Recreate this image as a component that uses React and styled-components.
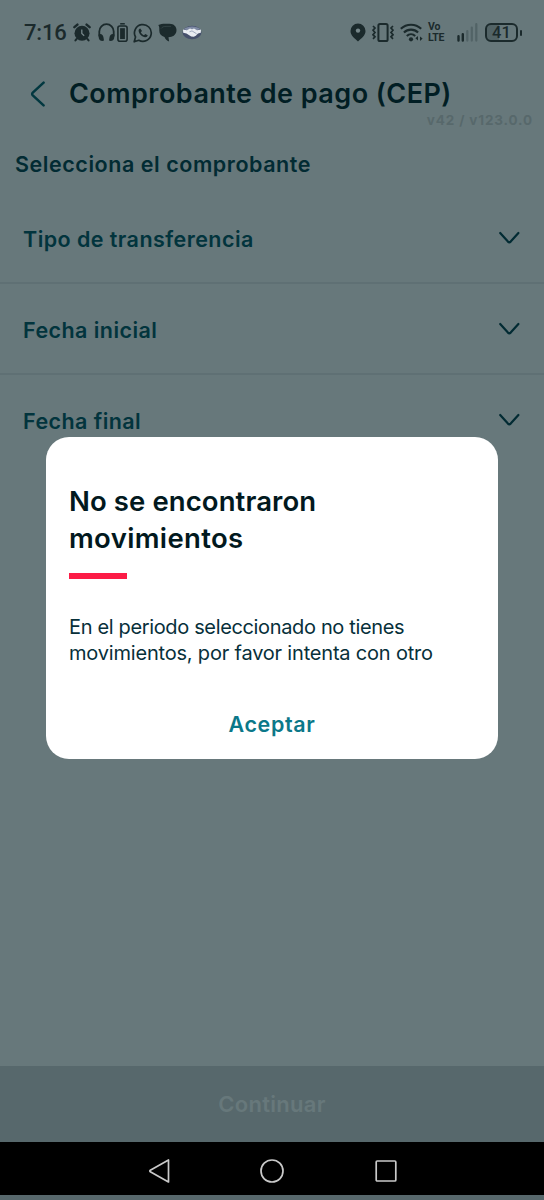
import React from "react";
import styled, { createGlobalStyle } from "styled-components";

const ROWS = ["Tipo de transferencia", "Fecha inicial", "Fecha final"];

const AlarmIcon = () => (
  <svg width="18" height="19" viewBox="0 0 18 19">
    <circle cx="9" cy="10.2" r="7.5" fill="#1b2a2c" />
    <path d="M1.4 4.2 4.4 1.6M16.6 4.2l-3-2.6" stroke="#1b2a2c" strokeWidth="2.4" strokeLinecap="round" />
    <path d="m3.6 16-1.200 1.400M14.400 16l1.200 1.400" stroke="#1b2a2c" strokeWidth="2" strokeLinecap="round" />
    <path d="M8.800 6.500v4l2.400 2.200" fill="none" stroke="#77878a" strokeWidth="1.300" />
  </svg>
);

const HeadphonesIcon = () => (
  <svg width="17" height="19" viewBox="0 0 17 19">
    <path d="M1.300 13.500V8.500a7.200 7.300 0 0 1 14.400 0v5" fill="none" stroke="#1b2a2c" strokeWidth="1.800" />
    <path d="M.6 11.400c2.800-1 4.400.4 4.900 3l.5 3.200c-2.600.9-4.800-.4-5.200-2.700ZM16.400 11.400c-2.800-1-4.400.4-4.900 3l-.5 3.200c2.600.9 4.800-.4 5.200-2.700Z" fill="#1b2a2c" />
  </svg>
);

const DeviceBatteryIcon = () => (
  <svg width="11" height="19" viewBox="0 0 11 19">
    <path d="M3.200.8h4.600" stroke="#1b2a2c" strokeWidth="1.500" />
    <rect x=".9" y="3" width="9.200" height="15.200" rx="2" fill="none" stroke="#1b2a2c" strokeWidth="1.600" />
    <rect x="3.100" y="5.200" width="4.800" height="10.800" fill="#1b2a2c" />
  </svg>
);

const WhatsappIcon = () => (
  <svg width="20" height="20" viewBox="0 0 20 20">
    <path d="M1.200 18.800 2.500 14a8.400 8.400 0 1 1 3.300 3.300Z" fill="none" stroke="#1b2a2c" strokeWidth="1.700" strokeLinejoin="round" />
    <path d="M7.300 5.400c-.9 0-1.800 1-1.700 2.300.3 3.200 3.500 6.200 6.600 6.600 1.300.1 2.400-.8 2.500-2l-2.400-1.400-1.300 1.300c-1.500-.7-2.500-1.600-3.200-3L9 7.900Z" fill="#1b2a2c" />
  </svg>
);

const ChatIcon = () => (
  <svg width="19" height="19" viewBox="0 0 19 19">
    <path d="M.3 2C2.500 1 4.500.7 7 .7h4.500c4.400 0 7 2.900 7 6.400 0 3.900-2.600 6.700-6.500 7l-1.500.1.600 4.400c-2.300-.9-3.800-2.500-4.600-4.600C3.300 13.200 1.300 11 1.300 7.800 1.300 5.300 1.500 3.500.3 2Z" fill="#1b2a2c" />
    <path d="M3 5.600C4.400 3.800 5.800 3.400 8 3.400h5" fill="none" stroke="#3f5053" strokeWidth=".6" />
  </svg>
);

const HandshakeIcon = () => (
  <svg width="20" height="15" viewBox="0 0 20 15">
    <ellipse cx="10" cy="7.500" rx="9.500" ry="6.700" fill="#46516c" />
    <path d="M2 4C4.500.6 15.500.6 18 4L15 5.200 10 4 5 5.200Z" fill="#7e8aa3" />
    <path d="M1 4.600 5 5.200 8 3.600 10 4.200 12 3.600 15 5.200 19 4.600 18.800 7.800 16 8.600 13.800 10.800 11.800 11.800 9.200 11.600 4.500 8.600 1.200 7.800Z" fill="#e9edf3" />
    <path d="m7.400 6.800 2.600-.9 4.600 2.900" fill="none" stroke="#8490aa" strokeWidth=".7" />
  </svg>
);

const PinIcon = () => (
  <svg width="16" height="19" viewBox="0 0 16 19">
    <path d="M8 .5a7.500 7.500 0 0 0-7.500 7.500C.5 12.600 4.500 15 8 18.600 11.500 15 15.500 12.600 15.500 8A7.500 7.500 0 0 0 8 .5Z" fill="#1b2a2c" />
    <circle cx="8" cy="7.600" r="2.200" fill="#76878a" />
  </svg>
);

const VibrateIcon = () => (
  <svg width="22" height="19" viewBox="0 0 22 19">
    <g fill="none" stroke="#1b2a2c" strokeWidth="1.700">
      <rect x="6.400" y="1" width="9.200" height="17" rx="1.600" strokeWidth="2" />
      <path d="m1 3 2 2-2 2.200 2 2.300-2 2.200 2 2.100-2 2M21 3l-2 2 2 2.200-2 2.300 2 2.200-2 2.100 2 2" />
    </g>
  </svg>
);

const WifiIcon = () => (
  <svg width="23" height="19" viewBox="0 0 23 19">
    <g fill="none" stroke="#1b2a2c" strokeWidth="2.100">
      <path d="M.8 5.800c5.800-5.500 14.600-5.500 20.400 0" />
      <path d="M3.900 9.500c4-3.900 10.200-3.900 14.200 0" />
      <path d="M6.800 13c2.400-2.300 6-2.300 8.400 0" />
    </g>
    <circle cx="11" cy="16.300" r="2.100" fill="#1b2a2c" />
    <path d="M18 13v4.500l-2.600-2.200ZM20 13.400v4.500l2.600-2.300Z" fill="#1b2a2c" />
  </svg>
);

const SignalIcon = () => (
  <svg width="21" height="19" viewBox="0 0 21 19">
    <path d="M1.500 17.600v-4.400M5.800 17.600v-6.400" stroke="#1b2a2c" strokeWidth="2.400" strokeLinecap="round" />
    <path d="M10.300 17.600V8M14.800 17.600V4.500M19.300 17.600V1.200" stroke="#526366" strokeWidth="2.200" strokeLinecap="round" />
  </svg>
);

const ChevronDown = () => (
  <svg width="21" height="14" viewBox="0 0 21 14">
    <path d="m1.200 2 7.700 8.600q1.400 1.300 2.800 0L19.400 2" fill="none" stroke="#022b33" strokeWidth="2.200" strokeLinecap="round" />
  </svg>
);

const BackIcon = () => (
  <svg width="16" height="26" viewBox="0 0 16 26">
    <path d="M13.600 1.700 2.800 11.700q-1.300 1.300 0 2.600l10.800 10" fill="none" stroke="#023840" strokeWidth="2.500" strokeLinecap="round" />
  </svg>
);

const App = () => {
  return (
    <>
      <GlobalStyle />
      <Screen>
        <StatusBar>
          <Time>7:16</Time>
          <Notifications>
            <AlarmIcon />
            <Pair>
              <HeadphonesIcon />
              <DeviceBatteryIcon />
            </Pair>
            <WhatsappIcon />
            <ChatIcon />
            <HandshakeIcon />
          </Notifications>
          <Indicators>
            <PinIcon />
            <VibrateIcon />
            <WifiIcon />
            <Volte>
              Vo
              <br />
              LTE
            </Volte>
            <SignalIcon />
            <Battery>41</Battery>
          </Indicators>
        </StatusBar>
        <Header>
          <BackIcon />
          <Title>Comprobante de pago (CEP)</Title>
        </Header>
        <Version>v42 / v123.0.0</Version>
        <Subtitle>Selecciona el comprobante</Subtitle>
        <Fields>
          {ROWS.map((label) => (
            <Field key={label}>
              <FieldLabel>{label}</FieldLabel>
              <ChevronDown />
            </Field>
          ))}
        </Fields>
        <Continue disabled>Continuar</Continue>
        <NavBar>
          <svg width="22" height="26" viewBox="0 0 22 26">
            <path d="M20.500 2v22L2.300 13.800q-1-.8 0-1.600Z" fill="none" stroke="#c9c9c9" strokeWidth="1.700" strokeLinejoin="round" />
          </svg>
          <svg width="26" height="26" viewBox="0 0 26 26">
            <circle cx="13" cy="13" r="11" fill="none" stroke="#c9c9c9" strokeWidth="1.700" />
          </svg>
          <svg width="24" height="26" viewBox="0 0 24 26">
            <rect x="2.200" y="3" width="19.600" height="20" rx="1" fill="none" stroke="#c9c9c9" strokeWidth="1.700" />
          </svg>
        </NavBar>
        <Dialog role="dialog">
          <DialogTitle>
            <Line $spacing="0.1px">No se encontraron</Line>
            <Line $spacing="0.35px">movimientos</Line>
          </DialogTitle>
          <Accent />
          <Message>
            <Line $spacing="-0.35px">En el periodo seleccionado no tienes</Line>
            <Line $spacing="-0.19px">movimientos, por favor intenta con otro</Line>
          </Message>
          <Accept>Aceptar</Accept>
        </Dialog>
      </Screen>
    </>
  );
};

const GlobalStyle = createGlobalStyle`
  * {
    box-sizing: border-box;
  }
  body {
    margin: 0;
    background: #67787b;
    font-family: Inter, "Liberation Sans", sans-serif;
  }
  svg {
    display: block;
    flex: none;
  }
`;

const Screen = styled.div`
  position: relative;
  display: flex;
  flex-direction: column;
  width: 544px;
  height: 1200px;
  overflow: hidden;
  background: #67787b;
  border-bottom: 5px solid #57686c;
`;

const StatusBar = styled.div`
  display: flex;
  align-items: center;
  height: 65px;
  padding: 0 22px 0 24px;
  color: #1b2a2c;
`;

const Time = styled.span`
  width: 49px;
  font-family: Roboto, sans-serif;
  font-size: 22px;
  font-weight: 500;
  letter-spacing: -0.2px;
`;

const Notifications = styled.div`
  display: flex;
  align-items: center;
  gap: 5px;
`;

const Pair = styled.div`
  display: flex;
  gap: 2px;
  margin-left: 2px;
`;

const Indicators = styled.div`
  display: flex;
  align-items: center;
  gap: 6px;
  margin-left: auto;
`;

const Volte = styled.div`
  width: 23px;
  margin-left: -1px;
  font-family: Roboto, sans-serif;
  font-size: 10.5px;
  font-weight: 700;
  line-height: 10.5px;
  letter-spacing: -0.2px;
`;

const Battery = styled.div`
  position: relative;
  display: flex;
  align-items: center;
  justify-content: center;
  width: 33px;
  height: 19px;
  margin: 0 4px 0 1px;
  border: 2px solid #1b2a2c;
  border-radius: 6px;
  background: linear-gradient(90deg, #526366 41%, transparent 41%);
  font-family: Roboto, sans-serif;
  font-size: 16.5px;
  font-weight: 500;
  line-height: 15px;

  &::after {
    content: "";
    position: absolute;
    right: -6px;
    width: 2px;
    height: 6px;
    border-radius: 1px;
    background: #1b2a2c;
  }
`;

const Header = styled.div`
  display: flex;
  align-items: center;
  height: 46px;
  padding: 12px 0 0 30px;
`;

const Title = styled.h1`
  margin: 0 0 0 23px;
  color: #011e24;
  font-size: 27px;
  font-weight: 600;
  line-height: 34px;
  letter-spacing: 0.46px;
  white-space: nowrap;
`;

const Version = styled.div`
  height: 20px;
  padding-right: 11px;
  color: #57686b;
  font-size: 13.5px;
  font-weight: 700;
  line-height: 19px;
  letter-spacing: 0.85px;
  text-align: right;
`;

const Subtitle = styled.h2`
  margin: 18px 0 0 15px;
  color: #022b33;
  font-size: 21.5px;
  font-weight: 600;
  line-height: 30px;
  letter-spacing: 0.55px;
`;

const Fields = styled.div`
  flex: 1;
  padding-top: 14px;
`;

const Field = styled.div`
  display: flex;
  align-items: center;
  justify-content: space-between;
  height: 91px;
  padding: 0 24px 0 23px;
  border-bottom: 2px solid #5f7074;

  &:last-child {
    border-color: transparent;
  }
`;

const FieldLabel = styled.span`
  padding-top: 2px;
  color: #02343d;
  font-size: 21.5px;
  font-weight: 600;
  letter-spacing: 0.44px;
`;

const Continue = styled.button`
  height: 76px;
  border: 0;
  background: #57686c;
  color: #67787b;
  font-family: inherit;
  font-size: 22px;
  font-weight: 600;
  letter-spacing: 0.3px;
`;

const NavBar = styled.div`
  display: flex;
  align-items: center;
  justify-content: center;
  gap: 89px;
  height: 53px;
  padding: 4px 0 0 1px;
  background: #000;
`;

const Dialog = styled.div`
  position: absolute;
  top: 437px;
  left: 46px;
  display: flex;
  flex-direction: column;
  width: 452px;
  height: 322px;
  padding: 46px 23px 0;
  border-radius: 23px;
  background: #fff;
`;

const Line = styled.span`
  display: block;
  letter-spacing: ${(props) => props.$spacing};
`;

const DialogTitle = styled.h3`
  margin: 0;
  color: #02191e;
  font-size: 27.5px;
  font-weight: 600;
  line-height: 36.5px;
`;

const Accent = styled.div`
  width: 58px;
  height: 6px;
  margin-top: 17px;
  background: #fc1c46;
`;

const Message = styled.p`
  margin: 35px 0 0;
  color: #07303a;
  font-size: 20px;
  line-height: 26px;
  white-space: nowrap;
`;

const Accept = styled.button`
  align-self: center;
  margin-top: 43px;
  padding: 0;
  border: 0;
  background: none;
  color: #0b7889;
  font-family: inherit;
  font-size: 21.5px;
  font-weight: 600;
  line-height: 30px;
  letter-spacing: 0.65px;
`;

export default App;
